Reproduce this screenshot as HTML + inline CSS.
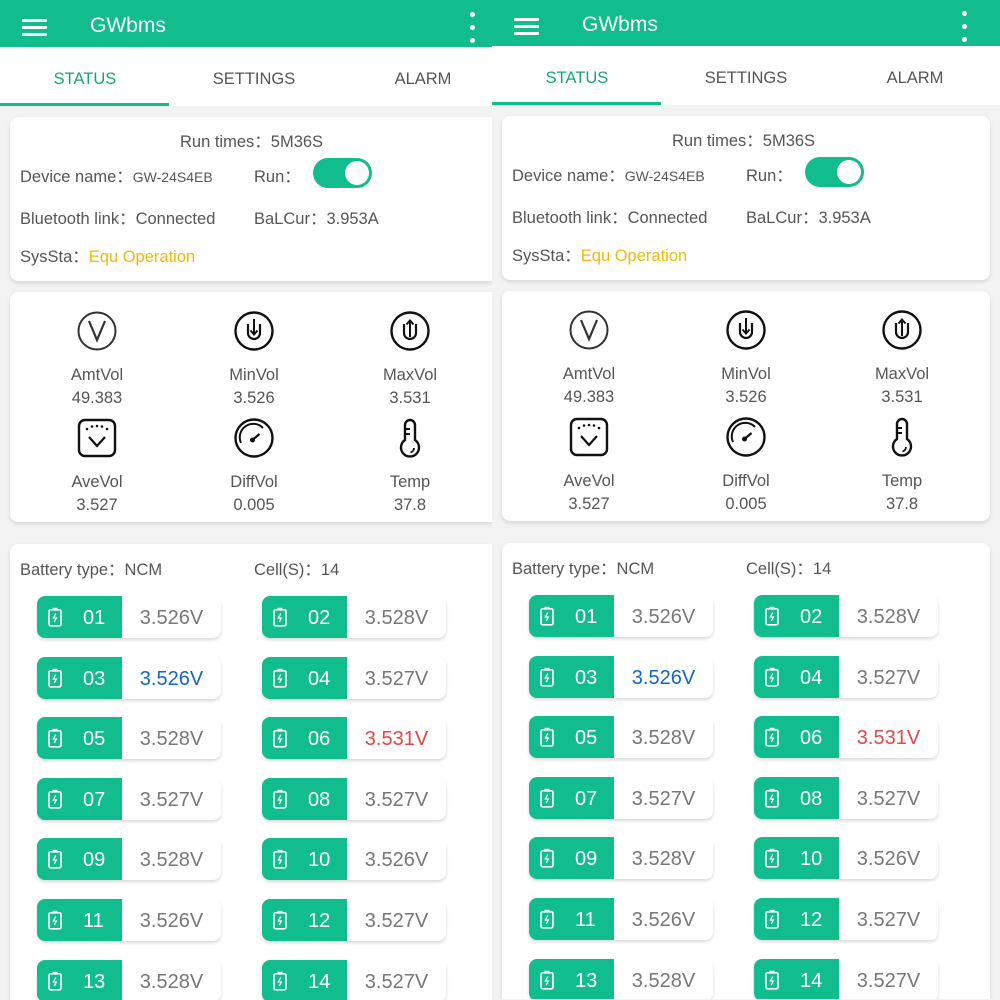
<!DOCTYPE html>
<html><head><meta charset="utf-8"><style>
*{margin:0;padding:0;box-sizing:border-box}
body{width:1000px;height:1000px;overflow:hidden;background:#f3f3f3;font-family:"Liberation Sans",sans-serif;position:relative}
.p{position:absolute;top:0;width:500px;height:1000px;overflow:hidden;background:#f3f3f3}
.a{position:absolute}
.hdr{left:0;top:0;width:100%;height:47px;background:#11bd8c}
.tabs{left:0;top:47px;width:100%;height:59px;background:#fff}
.tab{position:absolute;top:23px;font-size:16.5px;color:#555;width:170px;text-align:center}
.card{position:absolute;left:10px;width:488px;background:#fff;border-radius:8px;box-shadow:0 2px 4px rgba(0,0,0,.12)}
.t{position:absolute;font-size:16.5px;color:#555;white-space:nowrap}
.ic{position:absolute;width:42px;height:42px}
.lb{position:absolute;width:150px;text-align:center;font-size:16.5px;color:#555}
.cell{position:absolute;width:184px;height:42px;border-radius:8px;background:#fff;box-shadow:0 2px 3px rgba(0,0,0,.15);overflow:hidden}
.cell .g{position:absolute;left:0;top:0;width:85px;height:42px;background:#11bd8c;color:#fff;font-size:20px}
.cell .g span{position:absolute;left:46px;top:11px}
.cell .g svg{position:absolute;left:11px;top:11px}
.cell .v{position:absolute;left:85px;width:99px;top:11px;text-align:center;font-size:20px;color:#777}
</style></head><body>

<div class="p" id="L" style="left:0;width:492px"></div>
<div class="p" id="R" style="left:492px;top:-1px;width:508px"></div>

<script>
const bat='<svg width="14" height="20" viewBox="0 0 14 20"><rect x="4.5" y="0.8" width="5" height="2" fill="#fff"/><rect x="1" y="2.8" width="12" height="16" rx="1.5" fill="none" stroke="#fff" stroke-width="1.6"/><path d="M7.8 6.5L5.3 11h3l-2 4" fill="none" stroke="#fff" stroke-width="1.3"/></svg>';
const cells=[["01","3.526V","#777"],["02","3.528V","#777"],["03","3.526V","#1565c0"],["04","3.527V","#777"],["05","3.528V","#777"],["06","3.531V","#e04848"],["07","3.527V","#777"],["08","3.527V","#777"],["09","3.528V","#777"],["10","3.526V","#777"],["11","3.526V","#777"],["12","3.527V","#777"],["13","3.528V","#777"],["14","3.527V","#777"]];
let cellHtml='';
cells.forEach((c,i)=>{const x=i%2?262:37;const y=596+Math.floor(i/2)*60.6;
cellHtml+=`<div class="cell" style="left:${x}px;top:${y}px"><div class="g">${bat}<span>${c[0]}</span></div><div class="v" style="color:${c[2]}">${c[1]}</div></div>`;});
const ic={
v:'<svg class="ic" viewBox="0 0 42 42"><circle cx="21" cy="21" r="18.5" fill="none" stroke="#333" stroke-width="2"/><path d="M13 11l8 19 8-19" fill="none" stroke="#333" stroke-width="2.2"/></svg>',
min:'<svg class="ic" viewBox="0 0 42 42"><circle cx="21" cy="21" r="18.5" fill="none" stroke="#111" stroke-width="2.4"/><path d="M15 14v9a6 6 0 0 0 12 0v-9" fill="none" stroke="#111" stroke-width="2.2"/><path d="M21 9v15M17.5 20.5l3.5 4 3.5-4" fill="none" stroke="#111" stroke-width="2"/></svg>',
max:'<svg class="ic" viewBox="0 0 42 42"><circle cx="21" cy="21" r="18.5" fill="none" stroke="#111" stroke-width="2.4"/><path d="M15 14v9a6 6 0 0 0 12 0v-9" fill="none" stroke="#111" stroke-width="2.2"/><path d="M21 27V11M17.5 14.5l3.5-4 3.5 4" fill="none" stroke="#111" stroke-width="2"/></svg>',
ave:'<svg class="ic" viewBox="0 0 42 42"><rect x="3" y="3" width="36" height="36" rx="6" fill="none" stroke="#111" stroke-width="2.4"/><g fill="#111"><circle cx="11" cy="12" r="1.3"/><circle cx="16" cy="9.5" r="1.3"/><circle cx="21" cy="9" r="1.3"/><circle cx="26" cy="9.5" r="1.3"/><circle cx="31" cy="12" r="1.3"/></g><path d="M13 20l8 9 8-9" fill="none" stroke="#111" stroke-width="2.2"/></svg>',
diff:'<svg class="ic" viewBox="0 0 42 42"><circle cx="21" cy="21" r="18.5" fill="none" stroke="#111" stroke-width="2.4"/><path d="M8 26a13.5 13.5 0 0 1 22-15" fill="none" stroke="#111" stroke-width="2"/><circle cx="19.5" cy="23" r="2.5" fill="#111"/><path d="M19.5 23l7-6" stroke="#111" stroke-width="2.2"/></svg>',
temp:'<svg class="ic" viewBox="0 0 42 42"><path d="M16 23V8a5 5 0 0 1 10 0v15a9 9 0 1 1 -10 0z" fill="none" stroke="#111" stroke-width="2.4"/><path d="M16 12h5M16 17h5" stroke="#111" stroke-width="2"/><path d="M25 31a5 5 0 0 1-3.5 4.5" fill="none" stroke="#111" stroke-width="1.8"/></svg>'};
function stat(cx,y,icon,l,v){return `<div style="position:absolute;left:${cx-21}px;top:${y}px">${icon}</div><div class="lb" style="left:${cx-75}px;top:${y+56}px">${l}</div><div class="lb" style="left:${cx-75}px;top:${y+79}px">${v}</div>`;}
const html=`
<div class="a hdr">
 <div class="a" style="left:22px;top:19px;width:25px;height:3px;background:#fff;border-radius:1px"></div>
 <div class="a" style="left:22px;top:26px;width:25px;height:3px;background:#fff;border-radius:1px"></div>
 <div class="a" style="left:22px;top:33px;width:25px;height:3px;background:#fff;border-radius:1px"></div>
 <div class="a" style="left:90px;top:14px;color:#fff;font-size:21px">GWbms</div>
 <div class="a" style="left:470px;top:12px;width:5px;height:5px;border-radius:50%;background:#fff"></div>
 <div class="a" style="left:470px;top:25px;width:5px;height:5px;border-radius:50%;background:#fff"></div>
 <div class="a" style="left:470px;top:38px;width:5px;height:5px;border-radius:50%;background:#fff"></div>
</div>
<div class="a tabs">
 <div class="tab" style="left:0;color:#11a57c">STATUS</div>
 <div class="tab" style="left:169px">SETTINGS</div>
 <div class="tab" style="left:338px">ALARM</div>
 <div class="a" style="left:0;top:56px;width:169px;height:3px;background:#11bd8c"></div>
</div>
<div class="card" style="top:117px;height:164px">
 <div class="t" style="left:170px;top:11px">Run times：5M36S</div>
 <div class="t" style="left:10px;top:46px">Device name：<span style="font-size:14px">GW-24S4EB</span></div>
 <div class="t" style="left:244px;top:46px">Run：</div>
 <div class="a" style="left:303px;top:41px;width:59px;height:30px;border-radius:15px;background:#11bd8c"><div class="a" style="left:32px;top:3px;width:24px;height:24px;border-radius:50%;background:#fff"></div></div>
 <div class="t" style="left:10px;top:88px">Bluetooth link：Connected</div>
 <div class="t" style="left:244px;top:88px">BaLCur：3.953A</div>
 <div class="t" style="left:10px;top:126px">SysSta：<span style="color:#f0b70f">Equ Operation</span></div>
</div>
<div class="card" style="top:292px;height:230px">
 ${stat(87,18,ic.v,'AmtVol','49.383')}${stat(244,18,ic.min,'MinVol','3.526')}${stat(400,18,ic.max,'MaxVol','3.531')}
 ${stat(87,125,ic.ave,'AveVol','3.527')}${stat(244,125,ic.diff,'DiffVol','0.005')}${stat(400,125,ic.temp,'Temp','37.8')}
</div>
<div class="card" style="top:544px;height:480px">
 <div class="t" style="left:10px;top:12px">Battery type：NCM</div>
 <div class="t" style="left:244px;top:12px">Cell(S)：14</div>
</div>
${cellHtml}`;
document.getElementById('L').innerHTML=html;
document.getElementById('R').innerHTML=html;
</script>
<style>#R .hdr{width:508px}#R .tabs{width:508px}</style>
</body></html>
